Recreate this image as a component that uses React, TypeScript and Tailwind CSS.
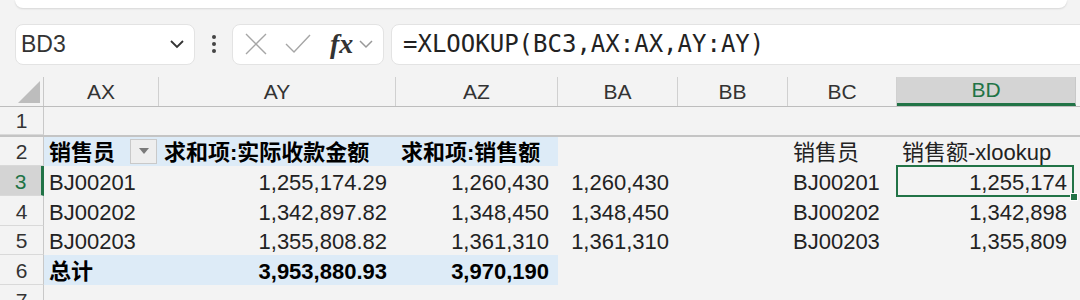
import React from "react";

const FONT = '"Liberation Sans", "Noto Sans CJK SC", Arial, sans-serif';

const widths = [44, 115, 237, 162, 120, 110, 109, 179, 40];
const letters = ["", "AX", "AY", "AZ", "BA", "BB", "BC", "BD", ""];

type Cell = { t?: string; r?: boolean; b?: boolean; blue?: boolean; dd?: boolean };

const rows: Cell[][] = [
  [],
  [
    { t: "销售员", b: true, blue: true, dd: true },
    { t: "求和项:实际收款金额", b: true, blue: true },
    { t: "求和项:销售额", b: true, blue: true },
    {},
    {},
    { t: "销售员" },
    { t: "销售额-xlookup" },
  ],
  [
    { t: "BJ00201" },
    { t: "1,255,174.29", r: true },
    { t: "1,260,430", r: true },
    { t: "1,260,430", r: true },
    {},
    { t: "BJ00201" },
    { t: "1,255,174", r: true },
  ],
  [
    { t: "BJ00202" },
    { t: "1,342,897.82", r: true },
    { t: "1,348,450", r: true },
    { t: "1,348,450", r: true },
    {},
    { t: "BJ00202" },
    { t: "1,342,898", r: true },
  ],
  [
    { t: "BJ00203" },
    { t: "1,355,808.82", r: true },
    { t: "1,361,310", r: true },
    { t: "1,361,310", r: true },
    {},
    { t: "BJ00203" },
    { t: "1,355,809", r: true },
  ],
  [
    { t: "总计", b: true, blue: true },
    { t: "3,953,880.93", b: true, r: true, blue: true },
    { t: "3,970,190", b: true, r: true, blue: true },
  ],
  [],
];

export default function App() {
  return (
    <div
      className="w-[1080px] h-[300px] overflow-hidden bg-[#f3f3f3] text-[#222]"
      style={{ fontFamily: FONT }}
    >
      {/* ribbon bottom */}
      <div className="ml-[15px] w-[1052px] h-[8px] bg-white rounded-b-[10px] shadow-[0_1px_2px_rgba(0,0,0,0.12)]" />

      {/* formula bar */}
      <div className="flex items-center h-[42px] mt-[15px] pl-[15px]">
        <div className="shrink-0 w-[180px] h-[41px] bg-white border border-[#e3e3e3] rounded-[8px] flex items-center justify-between pl-[5px] pr-[9px]">
          <span className="text-[23px] text-[#333]">BD3</span>
          <svg width="16" height="10" viewBox="0 0 16 10">
            <path d="M2 2 L8 8 L14 2" fill="none" stroke="#333" strokeWidth="1.8" />
          </svg>
        </div>
        <div className="shrink-0 w-[37px] flex justify-center">
          <svg width="6" height="20" viewBox="0 0 6 20">
            <circle cx="3" cy="3" r="2" fill="#444" />
            <circle cx="3" cy="10" r="2" fill="#444" />
            <circle cx="3" cy="17" r="2" fill="#444" />
          </svg>
        </div>
        <div className="shrink-0 w-[152px] h-[41px] bg-white border border-[#e3e3e3] rounded-[8px] flex items-center pl-[11px]">
          <svg width="24" height="24" viewBox="0 0 24 24">
            <path d="M2 2 L22 22 M22 2 L2 22" stroke="#a6a6a6" strokeWidth="1.4" fill="none" />
          </svg>
          <svg width="26" height="20" viewBox="0 0 26 20" className="ml-[17px]">
            <path d="M1 10 L9 18 L25 1" stroke="#a6a6a6" strokeWidth="1.4" fill="none" />
          </svg>
          <span
            className="ml-[19px] text-[28px] italic font-bold text-[#333] leading-none"
            style={{ fontFamily: '"Liberation Serif", "DejaVu Serif", serif' }}
          >
            fx
          </span>
          <svg width="16" height="10" viewBox="0 0 16 10" className="ml-[5px]">
            <path d="M2 2 L8 8 L14 2" fill="none" stroke="#999" strokeWidth="1.5" />
          </svg>
        </div>
        <div className="shrink-0 ml-[7px] w-[710px] h-[41px] bg-white border border-[#e3e3e3] rounded-[8px] flex items-center pl-[11px]">
          <span
            className="text-[24px] text-[#222]"
            style={{ fontFamily: '"DejaVu Sans Mono", "Liberation Mono", monospace' }}
          >
            =XLOOKUP(BC3,AX:AX,AY:AY)
          </span>
        </div>
      </div>

      {/* column headers */}
      <div className="flex mt-[12px] h-[30px] border-b border-[#bdbdbd]">
        {letters.map((l, i) => {
          if (i === 0) {
            return (
              <div
                key={i}
                className="shrink-0 h-full border-r border-[#c8c8c8] flex items-end justify-end pr-[3px] pb-[3px]"
                style={{ width: widths[i] }}
              >
                <svg width="22" height="22" viewBox="0 0 22 22">
                  <path d="M22 0 L22 22 L0 22 Z" fill="#bdbdbd" />
                </svg>
              </div>
            );
          }
          const sel = l === "BD";
          return (
            <div
              key={i}
              className={
                "shrink-0 h-full flex items-center justify-center text-[21px] " +
                (sel
                  ? "bg-[#d4d4d4] text-[#217346] border-b-[3px] border-[#217346] border-r border-r-[#c8c8c8]"
                  : "text-[#333] border-r border-[#d0d0d0]")
              }
              style={{ width: widths[i] }}
            >
              {l}
            </div>
          );
        })}
      </div>

      {/* rows */}
      {rows.map((row, ri) => {
        const rn = ri + 1;
        const selRow = rn === 3;
        return (
          <div
            key={ri}
            className={"flex h-[29.67px] " + (rn === 1 ? "border-b-2 border-[#c4c4c4]" : "")}
          >
            <div
              className={
                "shrink-0 h-full flex items-end justify-center text-[21px] border-b border-[#d9d9d9] " +
                (selRow
                  ? "bg-[#d4d4d4] text-[#217346] border-r-[3px] border-r-[#217346]"
                  : "text-[#333] border-r border-r-[#c8c8c8]")
              }
              style={{ width: widths[0] }}
            >
              <span className="leading-[26px]">{rn}</span>
            </div>
            {widths.slice(1).map((w, ci) => {
              const c = row[ci] || {};
              const isSel = rn === 3 && ci === 6;
              return (
                <div
                  key={ci}
                  className={
                    "shrink-0 h-full relative flex items-end text-[22px] whitespace-nowrap " +
                    (c.r ? "justify-end pr-[9px] " : "justify-start pl-[5px] ") +
                    (c.b ? "font-bold text-black " : "text-[#222] ") +
                    (c.blue ? "bg-[#ddebf7]" : "")
                  }
                  style={{ width: w }}
                >
                  <span className="leading-[27px]">{c.t}</span>
                  {c.dd && (
                    <div className="absolute right-[2px] top-[2px] w-[27px] h-[25px] bg-[#eeeeee] border border-[#c9c9c9] flex items-center justify-center">
                      <svg width="10" height="6" viewBox="0 0 10 6">
                        <path d="M0 0 L10 0 L5 6 Z" fill="#7a7a7a" />
                      </svg>
                    </div>
                  )}
                  {isSel && (
                    <>
                      <div className="absolute left-[-1px] right-[2px] top-[-1px] bottom-[-1px] border-2 border-[#217346]" />
                      <div className="absolute right-[-2px] bottom-[-5px] w-[8px] h-[8px] bg-[#217346] border border-white" />
                    </>
                  )}
                </div>
              );
            })}
          </div>
        );
      })}
    </div>
  );
}
